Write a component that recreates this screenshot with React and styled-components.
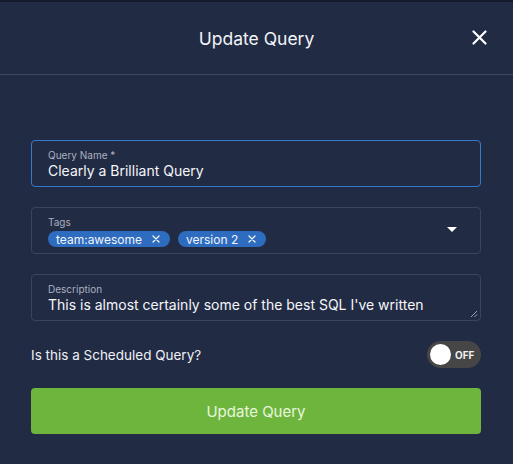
import React from 'react'
import styled, { createGlobalStyle } from 'styled-components'

const GlobalStyle = createGlobalStyle`
  html, body {
    margin: 0;
    padding: 0;
    background: #222b44;
    font-family: Inter, "Noto Sans", sans-serif;
  }
`

const Modal = styled.div`
  width: 513px;
  height: 464px;
  background: #222b44;
  border-top: 2px solid #121a2b;
  box-sizing: border-box;
  overflow: hidden;
`

const Header = styled.div`
  position: relative;
  height: 72px;
  display: flex;
  align-items: center;
  justify-content: center;
  border-bottom: 1px solid #3d4760;
`

const Title = styled.h2`
  margin: 0;
  font-size: 17.5px;
  font-weight: 400;
  color: #f2f4f8;
`

const CloseBtn = styled.button`
  position: absolute;
  right: 26px;
  top: 27px;
  width: 16px;
  height: 16px;
  padding: 0;
  border: 0;
  background: none;
  display: flex;
  align-items: center;
  justify-content: center;
`

const Body = styled.div`
  padding: 65px 32px 0 31px;
  display: flex;
  flex-direction: column;
`

const Field = styled.div`
  height: 47px;
  box-sizing: border-box;
  border: 1px solid ${p => (p.$focused ? '#3779c9' : '#3a445c')};
  border-radius: 4px;
  padding: 8px 16px 0 16px;
  margin-bottom: 20px;
  position: relative;
  display: flex;
  flex-direction: column;
`

const Label = styled.div`
  font-size: 10px;
  line-height: 12px;
  color: #aab1c0;
`

const Value = styled.div`
  font-size: 14px;
  line-height: 18px;
  color: #f4f6fa;
  margin-top: 1px;
`

const ChipRow = styled.div`
  display: flex;
  gap: 8px;
  margin-top: 3px;
`

const Chip = styled.span`
  display: inline-flex;
  align-items: center;
  height: 16px;
  padding: 0 10px 0 8px;
  border-radius: 8px;
  background: #2d6cbf;
  color: #f2f5fa;
  font-size: 12px;
  gap: 10px;
`

const Caret = styled.div`
  position: absolute;
  right: 23px;
  top: 19px;
  width: 0;
  height: 0;
  border-left: 5.5px solid transparent;
  border-right: 5.5px solid transparent;
  border-top: 5px solid #ffffff;
`

const Grip = styled.svg`
  position: absolute;
  right: 2px;
  bottom: 2px;
`

const ToggleRow = styled.div`
  display: flex;
  align-items: center;
  justify-content: space-between;
  height: 27px;
  margin-bottom: 20px;
`

const ToggleLabel = styled.span`
  font-size: 13.5px;
  color: #eef1f6;
`

const Toggle = styled.div`
  width: 54px;
  height: 27px;
  border-radius: 14px;
  background: #464646;
  box-sizing: border-box;
  padding: 3px;
  display: flex;
  align-items: center;
  gap: 4px;
`

const Knob = styled.span`
  width: 21px;
  height: 21px;
  border-radius: 50%;
  background: #ffffff;
`

const ToggleText = styled.span`
  font-size: 10px;
  font-weight: 700;
  color: #f0f0f0;
`

const SubmitBtn = styled.button`
  height: 46px;
  border: 0;
  border-radius: 4px;
  background: #6db53d;
  color: #e9f5df;
  font-family: inherit;
  font-size: 15px;
  font-weight: 400;
`

const SmallX = () => (
  <svg width="8" height="8" viewBox="0 0 8 8">
    <path d="M1 1L7 7M7 1L1 7" stroke="#f2f5fa" strokeWidth="1.3" strokeLinecap="round" />
  </svg>
)

const App = () => {
  return (
    <Modal>
      <GlobalStyle />
      <Header>
        <Title>Update Query</Title>
        <CloseBtn aria-label="close">
          <svg width="15" height="15" viewBox="0 0 15 15">
            <path d="M1.5 1.5L13.5 13.5M13.5 1.5L1.5 13.5" stroke="#ffffff" strokeWidth="2.2" strokeLinecap="round" />
          </svg>
        </CloseBtn>
      </Header>
      <Body>
        <Field $focused>
          <Label>Query Name *</Label>
          <Value>Clearly a Brilliant Query</Value>
        </Field>
        <Field>
          <Label>Tags</Label>
          <ChipRow>
            <Chip>team:awesome <SmallX /></Chip>
            <Chip>version 2 <SmallX /></Chip>
          </ChipRow>
          <Caret />
        </Field>
        <Field>
          <Label>Description</Label>
          <Value>This is almost certainly some of the best SQL I've written</Value>
          <Grip width="8" height="8" viewBox="0 0 8 8">
            <path d="M7 1L1 7M7 4.5L4.5 7" stroke="#9aa0ad" strokeWidth="1" />
          </Grip>
        </Field>
        <ToggleRow>
          <ToggleLabel>Is this a Scheduled Query?</ToggleLabel>
          <Toggle>
            <Knob />
            <ToggleText>OFF</ToggleText>
          </Toggle>
        </ToggleRow>
        <SubmitBtn>Update Query</SubmitBtn>
      </Body>
    </Modal>
  )
}

export default App
